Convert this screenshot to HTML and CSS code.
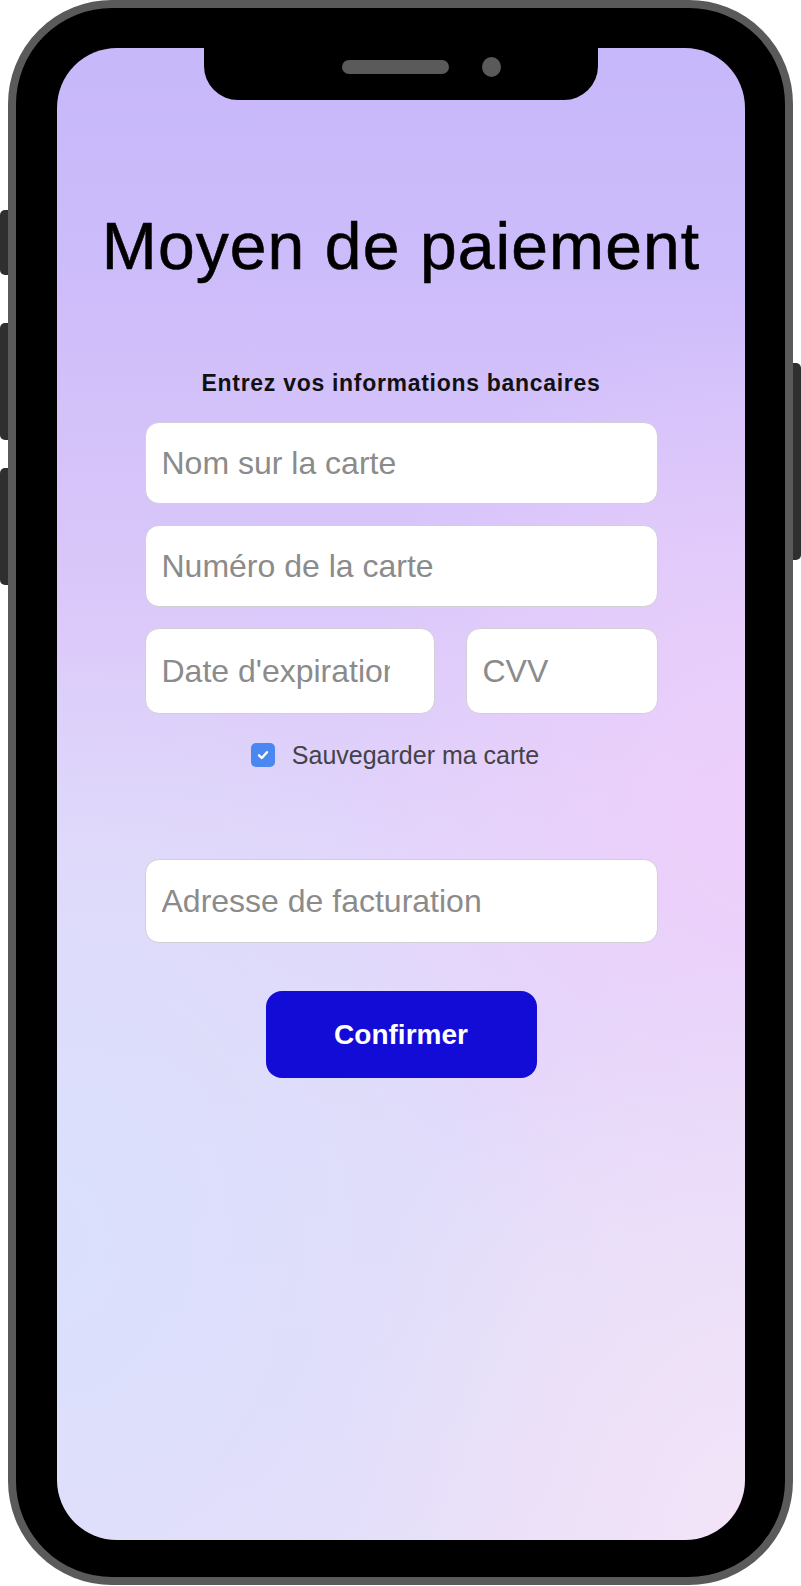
FILE: index.html
```html
<!DOCTYPE html>
<html lang="fr">
<head>
<meta charset="utf-8">
<title>Moyen de paiement</title>
<link rel="stylesheet" href="styles.css">
</head>
<body>
<div class="device">
  <span class="side-btn btn-mute"></span>
  <span class="side-btn btn-vol-up"></span>
  <span class="side-btn btn-vol-down"></span>
  <span class="side-btn btn-power"></span>
  <div class="phone">
    <div class="screen">
      <div class="notch"><span class="speaker"></span><span class="camera"></span></div>
      <h1 class="title">Moyen de paiement</h1>
      <form class="form">
        <p class="form-label">Entrez vos informations bancaires</p>
        <input class="field" type="text" placeholder="Nom sur la carte">
        <input class="field field-gap" type="text" placeholder="Numéro de la carte">
        <div class="row">
          <input class="field field-date" type="text" placeholder="Date d'expiration">
          <input class="field field-cvv" type="text" placeholder="CVV">
        </div>
        <label class="check-row">
          <span class="checkbox"><svg width="14" height="14" viewBox="0 0 14 14"><path d="M3 7.3 L5.8 10 L11 4.2" fill="none" stroke="#fff" stroke-width="2.4" stroke-linecap="round" stroke-linejoin="round"/></svg></span>
          <span class="check-label">Sauvegarder ma carte</span>
        </label>
        <input class="field field-address" type="text" placeholder="Adresse de facturation">
        <button class="confirm" type="button">Confirmer</button>
      </form>
    </div>
  </div>
</div>
</body>
</html>
```

FILE: styles.css
```css
html, body {
  margin: 0;
  padding: 0;
  background: #fff;
}

.device {
  position: relative;
  width: 801px;
  height: 1586px;
}

.side-btn {
  position: absolute;
  background: #2f2f2f;
  width: 10px;
}
.btn-mute { left: 0; top: 210px; height: 65px; border-radius: 5px 0 0 5px; }
.btn-vol-up { left: 0; top: 323px; height: 117px; border-radius: 5px 0 0 5px; }
.btn-vol-down { left: 0; top: 468px; height: 117px; border-radius: 5px 0 0 5px; }
.btn-power { left: 791px; top: 363px; height: 197px; border-radius: 0 5px 5px 0; }

.phone {
  position: relative;
  z-index: 1;
  margin-left: 8px;
  width: 785px;
  height: 1585px;
  box-sizing: border-box;
  border: 8px solid #5a5a5a;
  border-radius: 104px;
  background: #000;
  padding: 40px 40px 37px 41px;
}

.screen {
  position: relative;
  width: 100%;
  height: 100%;
  box-sizing: border-box;
  border-radius: 60px;
  overflow: hidden;
  padding-top: 165px;
  display: flex;
  flex-direction: column;
  align-items: center;
  background:
    radial-gradient(ellipse 70% 40% at 0% 80%, rgba(218, 224, 252, 1) 0%, rgba(218, 224, 252, 0) 100%),
    radial-gradient(ellipse 60% 40% at 100% 100%, rgba(243, 228, 248, 1) 0%, rgba(243, 228, 248, 0) 100%),
    radial-gradient(ellipse 60% 35% at 100% 52%, rgba(237, 207, 250, 1) 0%, rgba(237, 207, 250, 0) 100%),
    linear-gradient(180deg, #c7b8fb 0%, #cdbcfa 15%, #d9c7fa 35%, #e2d6fa 55%, #e2dcfa 75%, #e6def9 100%);
}

.notch {
  position: absolute;
  top: 0;
  left: 147px;
  width: 394px;
  height: 52px;
  background: #000;
  border-radius: 0 0 34px 34px;
  display: flex;
  align-items: flex-start;
  padding-left: 138px;
  box-sizing: border-box;
  gap: 33px;
}

.speaker {
  margin-top: 12px;
  width: 107px;
  height: 14px;
  border-radius: 7px;
  background: #5a5a5a;
}

.camera {
  margin-top: 9px;
  width: 19px;
  height: 20px;
  border-radius: 50%;
  background: #5a5a5a;
}

.title {
  margin: 0;
  font-family: "Liberation Sans", Arial, sans-serif;
  font-weight: 400;
  font-size: 66px;
  line-height: 1;
  letter-spacing: 1.1px;
  color: #000;
  -webkit-text-stroke: 0.6px #000;
}

.form {
  width: 513px;
  margin-top: 93px;
  display: flex;
  flex-direction: column;
}

.form-label {
  margin: 0 0 27px;
  text-align: center;
  font-family: "Liberation Sans", Arial, sans-serif;
  font-weight: 700;
  font-size: 23px;
  line-height: 1;
  letter-spacing: 0.7px;
  color: #111;
}

.field {
  display: block;
  width: 100%;
  height: 82px;
  box-sizing: border-box;
  margin: 0;
  border: 1px solid #d2cfd6;
  border-radius: 14px;
  background: #fff;
  padding: 0 16px;
  font-family: "Liberation Sans", Arial, sans-serif;
  font-size: 32px;
  color: #333;
  outline: none;
}
.field::placeholder {
  color: #8b8b8b;
  opacity: 1;
}

.field-gap { margin-top: 21px; }

.row {
  display: flex;
  gap: 31px;
  margin-top: 21px;
}
.field-date {
  width: 290px;
  height: 86px;
  padding-right: 44px;
}
.field-cvv {
  flex: 1;
  width: auto;
  min-width: 0;
  height: 86px;
}

.check-row {
  display: flex;
  align-items: center;
  justify-content: center;
  gap: 17px;
  height: 30px;
  margin-top: 26px;
  padding-right: 12px;
}
.checkbox {
  width: 24px;
  height: 24px;
  border-radius: 5px;
  background: #4a87f1;
  display: flex;
  align-items: center;
  justify-content: center;
}
.checkbox svg { display: block; }
.check-label {
  font-family: "Liberation Sans", Arial, sans-serif;
  font-size: 25px;
  color: #444249;
}

.field-address {
  margin-top: 89px;
  height: 84px;
}

.confirm {
  align-self: center;
  margin-top: 48px;
  width: 271px;
  height: 87px;
  border: none;
  border-radius: 16px;
  background: #130bd6;
  color: #fff;
  font-family: "Liberation Sans", Arial, sans-serif;
  font-weight: 700;
  font-size: 28px;
  cursor: pointer;
}
```
